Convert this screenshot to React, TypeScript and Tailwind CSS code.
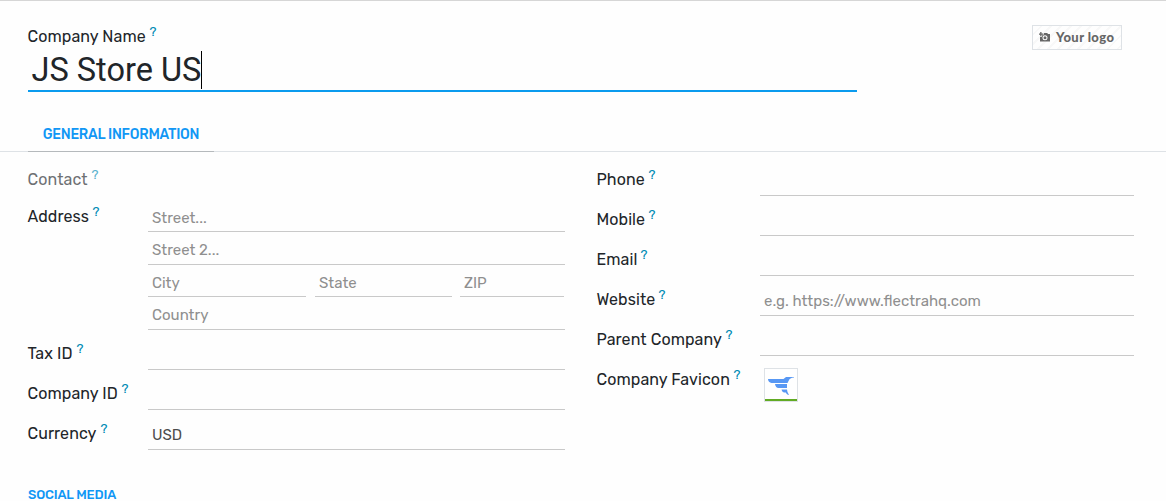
import React from "react";

type LabelProps = { text: string; width: string; muted?: boolean };

function Label({ text, width, muted }: LabelProps) {
  return (
    <label className={`-ml-[0.5px] flex h-6 items-start whitespace-nowrap text-base leading-6 text-[#212529] ${muted ? "opacity-65" : ""}`}>
      <span className={`${width} tracking-[0.08px]`}>{text}</span>
      <span className="-mt-[5px] text-[13px] leading-6 text-[#008bb5]">?</span>
    </label>
  );
}

type InputProps = { value?: string; placeholder?: string; className?: string };

function Field({ value, placeholder, className = "" }: InputProps) {
  return (
    <div className={`border-b border-[#c9c9c9] pl-1 text-[15px] ${className}`}>
      <div className="flex h-full items-end pb-[3px] leading-[22px]">
        {value ? <span className="text-[#4c4c4c]">{value}</span> : <span className="text-[#8f8f8f]">{placeholder}</span>}
      </div>
    </div>
  );
}

function Row({ label, side, children }: { label: React.ReactNode; side: string; children: React.ReactNode }) {
  return (
    <div className="flex h-10">
      <div className={`${side} shrink-0 pt-3`}>{label}</div>
      {children}
    </div>
  );
}

export default function App() {
  return (
    <main className="h-[501px] w-[1166px] overflow-hidden border-t border-[#d6d6d6] bg-[#fefefe] font-['Rubik','Roboto',sans-serif]">
      <header className="flex h-[91px] justify-between pl-7 pr-[44px]">
        <div className="w-[829px] pt-6">
          <Label text="Company Name" width="w-[122px]" />
          <div className="flex h-[43px] items-center border-b-2 border-[#0b9bee] pl-[3.5px] font-['Roboto',sans-serif] text-[32.5px] text-[#212529]">
            <span className="mt-px whitespace-nowrap">JS Store US</span>
            <span className="-ml-[0.5px] mt-px h-[38px] w-px bg-black" />
          </div>
        </div>
        <button className="mt-6 flex h-[25px] w-[90px] items-center border border-[#dee2e6] bg-[repeating-linear-gradient(135deg,#fefefe_0px,#fefefe_5px,#f8f8f8_5px,#f8f8f8_7px)] pl-1.5 text-[#666666]">
          <svg className="-mt-0.5" width="11" height="10" viewBox="0 0 11 10" fill="currentColor">
            <path d="M0 1.500h1.200V0h1.300v1.500H4v1.200H2.500v1.400H1.200V2.700H0z" />
            <path fillRule="evenodd" d="M4.500 2 5.200 1h3l.8 1h2v7.500H1V4.700h2V3.300h1.500zM6 3.200a2.500 2.500 0 1 0 0 5 2.500 2.500 0 0 0 0-5zm0 1a1.500 1.500 0 1 1 0 3 1.500 1.500 0 0 1 0-3z" />
          </svg>
          <span className="-mt-0.5 ml-1.5 whitespace-nowrap font-['Lato',sans-serif] text-[13px] font-black leading-5 tracking-[0.4px]">Your logo</span>
        </button>
      </header>

      <nav className="flex h-[60px] items-end border-b border-[#dee2e6] pl-7">
        <div className="-mb-px flex h-[36px] w-[186px] items-center justify-center border-b border-[#b5b9bc] pt-0.5 text-sm font-medium tracking-[-0.24px] text-[#1197f5]">
          <span className="whitespace-nowrap">GENERAL INFORMATION</span>
        </div>
      </nav>

      <div className="flex pl-7">
        <section className="w-[537px]">
          <div className="h-[37px] pt-4">
            <Label text="Contact" width="w-[64px]" muted />
          </div>
          <div className="flex h-[141px]">
            <div className="w-[120px] shrink-0 pt-4">
              <Label text="Address" width="w-[65px]" />
            </div>
            <div className="flex-1 pt-[11px]">
              <Field placeholder="Street..." className="h-8 [&>div]:pb-0.5" />
              <Field placeholder="Street 2..." className="h-[33px]" />
              <div className="flex h-8 gap-[9px]">
                <Field placeholder="City" className="w-[158px] [&>div]:pb-0.5" />
                <Field placeholder="State" className="w-[137px] [&>div]:pb-0.5" />
                <Field placeholder="ZIP" className="-ml-px w-[104px] [&>div]:pb-0.5" />
              </div>
              <Field placeholder="Country" className="h-[33px]" />
            </div>
          </div>
          <Row side="w-[120px]" label={<Label text="Tax ID" width="w-[49px]" />}>
            <Field className="flex-1" />
          </Row>
          <Row side="w-[120px]" label={<Label text="Company ID" width="w-[94px]" />}>
            <Field className="flex-1" />
          </Row>
          <Row side="w-[120px]" label={<Label text="Currency" width="w-[73px]" />}>
            <Field value="USD" className="flex-1" />
          </Row>
          <h2 className="mt-[35px] text-[13px] font-medium leading-5 tracking-[-0.17px] text-[#1197f5]">SOCIAL MEDIA</h2>
        </section>

        <section className="ml-8 w-[537px] pt-1">
          <Row side="w-[163px]" label={<Label text="Phone" width="w-[52px]" />}>
            <Field className="flex-1" />
          </Row>
          <Row side="w-[163px]" label={<Label text="Mobile" width="w-[52px]" />}>
            <Field className="flex-1" />
          </Row>
          <Row side="w-[163px]" label={<Label text="Email" width="w-[44px]" />}>
            <Field className="flex-1" />
          </Row>
          <Row side="w-[163px]" label={<Label text="Website" width="w-[62px]" />}>
            <Field placeholder="e.g. https://www.flectrahq.com" className="flex-1" />
          </Row>
          <Row side="w-[163px]" label={<Label text="Parent Company" width="w-[129px]" />}>
            <Field className="flex-1" />
          </Row>
          <Row side="w-[163px]" label={<Label text="Company Favicon" width="w-[137px]" />}>
            <div className="ml-1 mt-3 flex h-[34px] w-[34px] flex-col border border-[#dee2e6] bg-white">
              <svg className="h-[30px] w-8 shrink-0" viewBox="0 0 32 30" fill="#5898f4">
                <path d="M3 10h15.500l2.500-2h8v.5c-3 .3-4.500 1.300-5.200 3L22.500 14H6.500C4.500 13.500 3 12.300 3 10z" />
                <path d="M10 15h12v4h-8.500c-2 0-3-1.500-3.500-4z" />
                <path d="M16.500 20.500H22l.5 2.500 1.500 3c-1.500-.3-2.500-1-3.200-2.500h-1.500c-1.300 0-2.300-1-2.800-3z" />
              </svg>
              <div className="h-0.5 shrink-0 bg-[#62ab24]" />
            </div>
          </Row>
        </section>
      </div>
    </main>
  );
}
